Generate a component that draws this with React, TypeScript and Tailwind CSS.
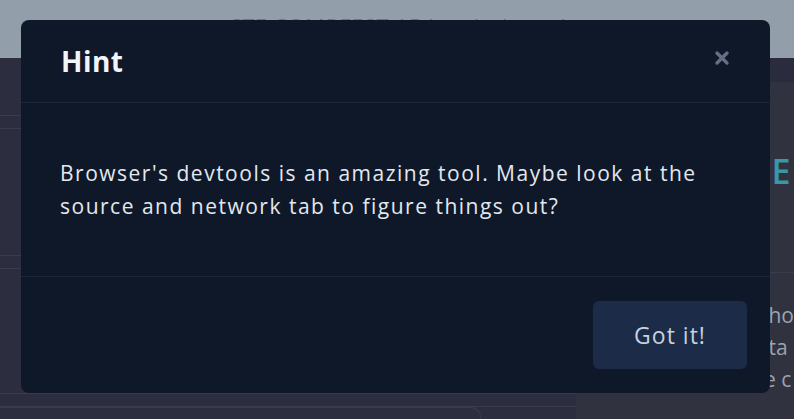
import { X } from 'lucide-react';

export default function App() {
  return (
    <div className="relative w-[794px] h-[419px] overflow-hidden bg-[#2d2d40] font-['Open_Sans',sans-serif]">
      {/* page behind the overlay */}
      <div className="h-[58px] bg-[#929fab] flex justify-center">
        <span className="mt-[10px] text-[22px] tracking-wide text-[#6a7682]">CTF COMPFEST 15 Leaderboard</span>
      </div>
      <div className="flex h-[361px]">
        <div className="w-[580px] flex flex-col">
          <div className="h-[57px]" />
          <div className="h-[14px] border-y border-[#3a3b50]" />
          <div className="h-[126px]" />
          <div className="h-[14px] border-y border-[#3a3b50]" />
          <div className="h-[124px]" />
          <div className="h-[14px] border-y border-[#3a3b50]" />
          <div className="flex-1 mr-[95px] rounded-tr-[10px] border-t border-r border-[#3a3b50]" />
        </div>
        <div className="flex-1 flex flex-col">
          <div className="h-[24px] bg-[#2a2b3c]" />
          <div className="flex-1 bg-[#30323f] flex flex-col">
            <div className="h-[191px] border-b border-[#3a3c4c] pl-[195px] pt-[72px]">
              <span className="text-[34px] font-semibold text-[#3a97a6] leading-none">E</span>
            </div>
            <div className="pl-[192px] pt-[26px] text-[21px] leading-[32px] text-[#9ca3af]">
              <div>ho</div>
              <div>ta</div>
              <div className="-ml-[16px]">ge c</div>
            </div>
          </div>
        </div>
      </div>

      {/* modal */}
      <div className="absolute left-[21px] top-[20px] w-[749px] h-[373px] rounded-[8px] bg-[#0f1828] flex flex-col">
        <div className="h-[83px] border-b border-[#1b253a] flex items-center justify-between pl-[40px] pr-[38px]">
          <h2 className="text-[28px] font-bold tracking-[0.5px] text-[#f1f5f9]">Hint</h2>
          <X size={20} strokeWidth={4} className="-mt-[6px] text-[#656e84]" />
        </div>
        <div className="h-[174px] border-b border-[#1b253a] flex items-center pl-[39px]">
          <p className="w-[660px] text-[21px] leading-[33px] tracking-[1.5px] text-[#e2e8f0]">
            Browser's devtools is an amazing tool. Maybe look at the source and network tab to figure things out?
          </p>
        </div>
        <div className="flex-1 flex items-start justify-end pt-[24px] pr-[23px]">
          <button className="w-[154px] h-[68px] rounded-[6px] bg-[#1b2b48] text-[23px] tracking-[1px] text-[#c8d1dd]">
            Got it!
          </button>
        </div>
      </div>
    </div>
  );
}
